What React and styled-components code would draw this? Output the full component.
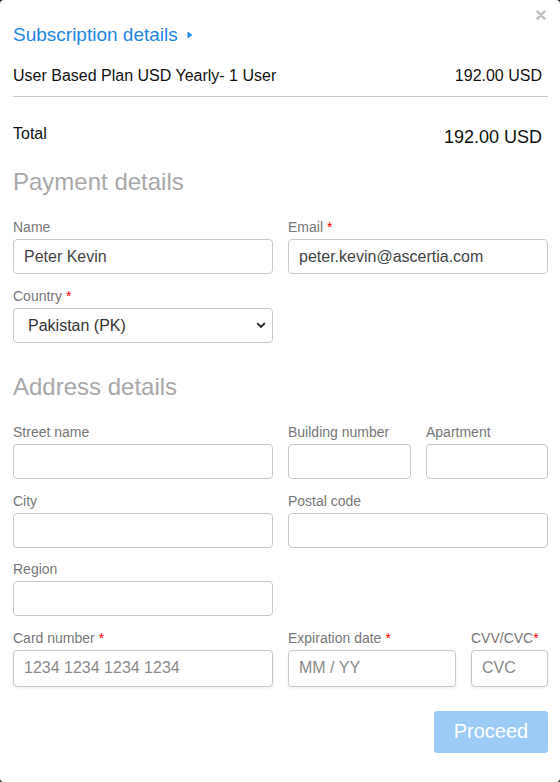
import React from "react";
import styled, { createGlobalStyle } from "styled-components";

const Global = createGlobalStyle`
  html, body { margin: 0; padding: 0; background: #1c1c1c; }
  body { font-family: "Liberation Sans", Arial, sans-serif; }
  * { box-sizing: border-box; }
`;

const Panel = styled.div`
  position: relative;
  width: 560px;
  height: 782px;
  background: #fff;
  border-radius: 4px;
  padding: 23px 12px 0 13px;
  display: flex;
  flex-direction: column;
`;

const Close = styled.button`
  position: absolute;
  top: 10px;
  right: 14px;
  width: 10px;
  height: 10px;
  padding: 0;
  border: 0;
  background: none;
  display: flex;
  cursor: pointer;
`;

const SubLink = styled.a`
  display: flex;
  align-items: center;
  gap: 9px;
  font-size: 19px;
  line-height: 24px;
  color: #1e86e3;
  text-decoration: none;
`;

const LineRow = styled.div`
  display: flex;
  justify-content: space-between;
  align-items: ${(p) => p.$align || "center"};
  margin-top: ${(p) => p.$mt}px;
  padding-right: 6px;
  color: #111;
`;

const Text = styled.span`
  font-size: ${(p) => p.$size}px;
  line-height: ${(p) => p.$lh}px;
`;

const Rule = styled.hr`
  margin: 10px 0 0;
  border: 0;
  border-top: 1px solid #c9c9c9;
  height: 0;
`;

const Heading = styled.h2`
  margin: ${(p) => p.$mt}px 0 0;
  font-size: 24px;
  line-height: 30px;
  font-weight: 400;
  color: #a8a8a8;
`;

const Stack = styled.div`
  display: flex;
  flex-direction: column;
  gap: ${(p) => p.$gap || 14}px;
  margin-top: ${(p) => p.$mt}px;
`;

const Row = styled.div`
  display: grid;
  grid-template-columns: ${(p) => p.$cols || "1fr 1fr"};
  column-gap: 15px;
`;

const Field = styled.label`
  display: flex;
  flex-direction: column;
  gap: 4px;
`;

const LabelText = styled.span`
  font-size: 14px;
  line-height: 16px;
  color: #777;
`;

const Req = styled.span`
  color: #f00;
  margin-left: ${(p) => (p.$tight ? 0 : 4)}px;
`;

const Input = styled.input`
  height: ${(p) => (p.$stripe ? 37 : 35)}px;
  width: 100%;
  border: 1px solid #c8c8c8;
  border-radius: 4px;
  padding: 0 10px;
  font-family: "Liberation Sans", Arial, sans-serif;
  font-size: 16px;
  color: #444;
  background: #fff;
  box-shadow: ${(p) => (p.$stripe ? "0 1px 3px rgba(0,0,0,0.08)" : "none")};
  outline: none;
  &::placeholder { color: #8a8a8a; }
`;

const SelectWrap = styled.div`
  position: relative;
  height: 35px;
`;

const Select = styled.select`
  appearance: none;
  -webkit-appearance: none;
  width: 100%;
  height: 35px;
  border: 1px solid #c8c8c8;
  border-radius: 4px;
  padding: 0 30px 0 14px;
  font-family: "Liberation Sans", Arial, sans-serif;
  font-size: 16px;
  color: #333;
  background: #fff;
  outline: none;
`;

const Chevron = styled.svg`
  position: absolute;
  right: 7px;
  top: 14px;
  pointer-events: none;
`;

const Actions = styled.div`
  display: flex;
  justify-content: flex-end;
  margin-top: 24px;
`;

const Proceed = styled.button`
  width: 114px;
  height: 42px;
  border: 0;
  border-radius: 3px;
  background: #9ccbf5;
  color: #fff;
  font-family: "Liberation Sans", Arial, sans-serif;
  font-size: 20px;
`;

const F = ({ label, req, tight, children }) => (
  <Field>
    <LabelText>
      {label}
      {req && <Req $tight={tight}>*</Req>}
    </LabelText>
    {children}
  </Field>
);

export default function App() {
  return (
    <>
      <Global />
      <Panel>
        <Close aria-label="close">
          <svg width="10" height="10" viewBox="0 0 10 10">
            <path d="M1.5 1.5 L8.5 8.5 M8.5 1.5 L1.5 8.5" stroke="#c4c4c4" strokeWidth="2.6" strokeLinecap="round" />
          </svg>
        </Close>

        <SubLink href="#">
          Subscription details
          <svg width="6" height="8" viewBox="0 0 6 8">
            <path d="M0.5 0.5 L5.5 4 L0.5 7.5 Z" fill="#1e86e3" />
          </svg>
        </SubLink>

        <LineRow $mt={19}>
          <Text $size={16} $lh={20}>User Based Plan USD Yearly- 1 User</Text>
          <Text $size={16} $lh={20}>192.00 USD</Text>
        </LineRow>
        <Rule />

        <LineRow $mt={27} $align="flex-start">
          <Text $size={16} $lh={20}>Total</Text>
          <Text $size={18} $lh={26}>192.00 USD</Text>
        </LineRow>

        <Heading $mt={17}>Payment details</Heading>
        <Stack $mt={22}>
          <Row>
            <F label="Name">
              <Input defaultValue="Peter Kevin" />
            </F>
            <F label="Email" req>
              <Input defaultValue="peter.kevin@ascertia.com" />
            </F>
          </Row>
          <Row>
            <F label="Country" req>
              <SelectWrap>
                <Select defaultValue="PK">
                  <option value="PK">Pakistan (PK)</option>
                </Select>
                <Chevron width="10" height="7" viewBox="0 0 10 7">
                  <path d="M1.2 1.2 L5 5 L8.8 1.2" fill="none" stroke="#222" strokeWidth="1.9" />
                </Chevron>
              </SelectWrap>
            </F>
          </Row>
        </Stack>

        <Heading $mt={29}>Address details</Heading>
        <Stack $mt={22} $gap={13.5}>
          <Row $cols="260px 123px 1fr">
            <F label="Street name"><Input /></F>
            <F label="Building number"><Input /></F>
            <F label="Apartment"><Input /></F>
          </Row>
          <Row>
            <F label="City"><Input /></F>
            <F label="Postal code"><Input /></F>
          </Row>
          <Row>
            <F label="Region"><Input /></F>
          </Row>
          <Row $cols="260px 168px 1fr">
            <F label="Card number" req>
              <Input $stripe placeholder="1234 1234 1234 1234" />
            </F>
            <F label="Expiration date" req>
              <Input $stripe placeholder="MM / YY" />
            </F>
            <F label="CVV/CVC" req tight>
              <Input $stripe placeholder="CVC" />
            </F>
          </Row>
        </Stack>

        <Actions>
          <Proceed>Proceed</Proceed>
        </Actions>
      </Panel>
    </>
  );
}
